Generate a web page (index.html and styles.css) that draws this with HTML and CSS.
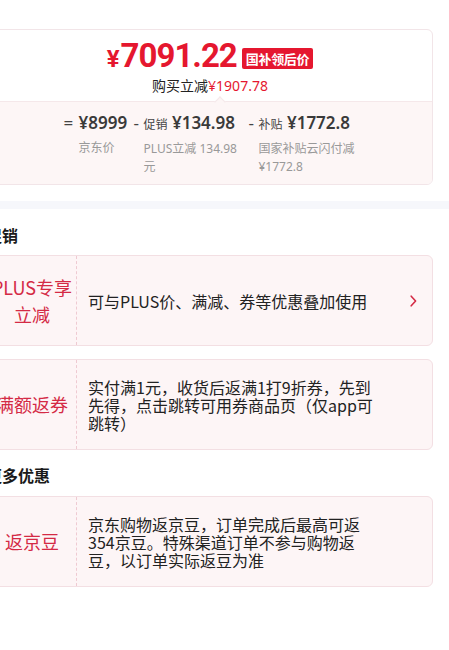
FILE: index.html
```html
<!DOCTYPE html>
<html lang="zh-CN">
<head>
<meta charset="utf-8">
<title>价格明细</title>
<link rel="stylesheet" href="styles.css">
</head>
<body>
<div class="page">
  <div class="price-card">
    <div class="price-head">
      <div class="price-line">
        <span class="cur">¥</span><span class="amt">7091.22</span><span class="badge">国补领后价</span>
      </div>
      <div class="save">购买立减<span class="red">¥1907.78</span></div>
      <span class="notch"></span>
    </div>
    <div class="price-calc">
      <div class="calc-item">
        <span class="op op-eq">=</span>
        <div class="calc-body calc-body-first">
          <div class="calc-main">¥8999</div>
          <div class="calc-sub">京东价</div>
        </div>
      </div>
      <div class="calc-item">
        <span class="op">-</span>
        <div class="calc-body">
          <div class="calc-main"><span class="calc-kind">促销</span> ¥134.98</div>
          <div class="calc-sub">PLUS立减 134.98元</div>
        </div>
      </div>
      <div class="calc-item">
        <span class="op">-</span>
        <div class="calc-body">
          <div class="calc-main"><span class="calc-kind">补贴</span> ¥1772.8</div>
          <div class="calc-sub">国家补贴云闪付减¥1772.8</div>
        </div>
      </div>
    </div>
  </div>

  <div class="band"></div>

  <section class="section">
    <h2 class="sec-title">促销</h2>
    <div class="promo">
      <div class="promo-tag">PLUS专享立减</div>
      <div class="promo-text">可与PLUS价、满减、券等优惠叠加使用</div>
      <div class="promo-arrow">
        <svg width="7" height="12" viewBox="0 0 7 12"><path d="M1.2 1.2 L5.6 6 L1.2 10.8" fill="none" stroke="#d42a45" stroke-width="1.6" stroke-linecap="round" stroke-linejoin="round"/></svg>
      </div>
    </div>
    <div class="promo">
      <div class="promo-tag">满额返券</div>
      <div class="promo-text">实付满1元，收货后返满1打9折券，先到先得，点击跳转可用券商品页（仅app可跳转）</div>
      <div class="promo-arrow"></div>
    </div>
  </section>

  <section class="section">
    <h2 class="sec-title">更多优惠</h2>
    <div class="promo">
      <div class="promo-tag">返京豆</div>
      <div class="promo-text">京东购物返京豆，订单完成后最高可返354京豆。特殊渠道订单不参与购物返豆，以订单实际返豆为准</div>
      <div class="promo-arrow"></div>
    </div>
  </section>
</div>
</body>
</html>
```

FILE: styles.css
```css
* { box-sizing: border-box; }

html, body {
  margin: 0;
  padding: 0;
  background: #ffffff;
  overflow: hidden;
}

body {
  font-family: "Noto Sans", "Noto Sans CJK SC", sans-serif;
  color: #333333;
}

.page {
  margin-left: -13px;
  width: 462px;
  padding-top: 29px;
}

/* ---------- price card ---------- */
.price-card {
  width: 446px;
  border: 1px solid #f2e5e8;
  border-radius: 6px;
  overflow: hidden;
  background: #ffffff;
}

.price-head {
  position: relative;
  height: 71px;
  padding-top: 6px;
  display: flex;
  flex-direction: column;
  align-items: center;
}

.price-line {
  display: flex;
  align-items: baseline;
  height: 39px;
  line-height: 39px;
  color: #e5172f;
  font-family: Roboto, "Noto Sans", sans-serif;
  font-weight: 700;
}

.cur {
  font-size: 24px;
  margin-right: 1px;
}

.amt {
  font-size: 33px;
  letter-spacing: -1px;
}

.badge {
  align-self: center;
  margin-left: 5px;
  margin-top: 6px;
  padding: 0 4px;
  height: 21px;
  line-height: 21px;
  border-radius: 2px;
  background: #e5172f;
  color: #ffffff;
  font-family: "Noto Sans CJK SC", sans-serif;
  font-size: 13px;
  font-weight: 700;
  letter-spacing: -0.3px;
}

.save {
  font-family: "Noto Sans CJK SC", sans-serif;
  font-size: 14px;
  line-height: 20px;
  color: #222222;
}

.red {
  color: #e5172f;
  font-family: "Noto Sans", sans-serif;
}

.notch {
  position: absolute;
  left: 228px;
  bottom: -5px;
  width: 8px;
  height: 8px;
  background: #fdf6f6;
  border-top: 1px solid #f5e8ea;
  border-left: 1px solid #f5e8ea;
  transform: rotate(45deg);
}

.price-calc {
  display: flex;
  justify-content: center;
  gap: 5px;
  padding: 9px 0 8px 2px;
  background: #fdf6f6;
  border-top: 1px solid #f5e8ea;
}

.calc-item {
  display: flex;
}

.op {
  width: 10px;
  font-size: 17px;
  line-height: 24px;
  color: #444444;
}

.op-eq {
  width: 15px;
}

.calc-body {
  width: 100px;
}

.calc-body-first {
  width: 50px;
}

.calc-main {
  font-size: 17px;
  line-height: 24px;
  font-weight: 600;
  color: #3a3a3a;
  white-space: nowrap;
}

.calc-kind {
  font-family: "Noto Sans CJK SC", sans-serif;
  font-size: 12px;
  font-weight: 400;
  color: #444444;
}

.calc-sub {
  margin-top: 4px;
  font-family: "Noto Sans", "Noto Sans CJK SC", sans-serif;
  font-size: 12px;
  line-height: 18px;
  color: #999999;
  word-break: break-all;
}

/* ---------- band ---------- */
.band {
  margin-top: 16px;
  height: 8px;
  background: #f6f7fb;
}

/* ---------- sections ---------- */
.section {
  width: 446px;
}

.sec-title {
  margin: 15px 0 9px -1px;
  font-family: "Noto Sans CJK SC", sans-serif;
  font-size: 16px;
  line-height: 22px;
  font-weight: 700;
  color: #1a1a1a;
}

.section + .section .sec-title {
  margin-top: 14px;
  margin-bottom: 10px;
}

.promo {
  display: flex;
  min-height: 91px;
  margin-bottom: 13px;
  border: 1px solid #f3dfe3;
  border-radius: 6px;
  background: #fdf5f6;
}

.section .promo:last-child {
  margin-bottom: 0;
}

.promo-tag {
  flex: none;
  width: 89px;
  padding: 0 2px;
  display: flex;
  align-items: center;
  justify-content: center;
  text-align: center;
  border-right: 1px dashed #efcad2;
  font-family: "Noto Sans CJK SC", sans-serif;
  font-size: 18px;
  line-height: 27px;
  color: #d42a45;
}

.promo-text {
  flex: none;
  width: 302px;
  padding: 17px 0 17px 11px;
  display: flex;
  align-items: center;
  font-family: "Noto Sans CJK SC", sans-serif;
  font-size: 16px;
  line-height: 18px;
  color: #222222;
}

.promo-arrow {
  flex: 1;
  display: flex;
  align-items: center;
  justify-content: flex-end;
  padding-right: 15px;
}
```
